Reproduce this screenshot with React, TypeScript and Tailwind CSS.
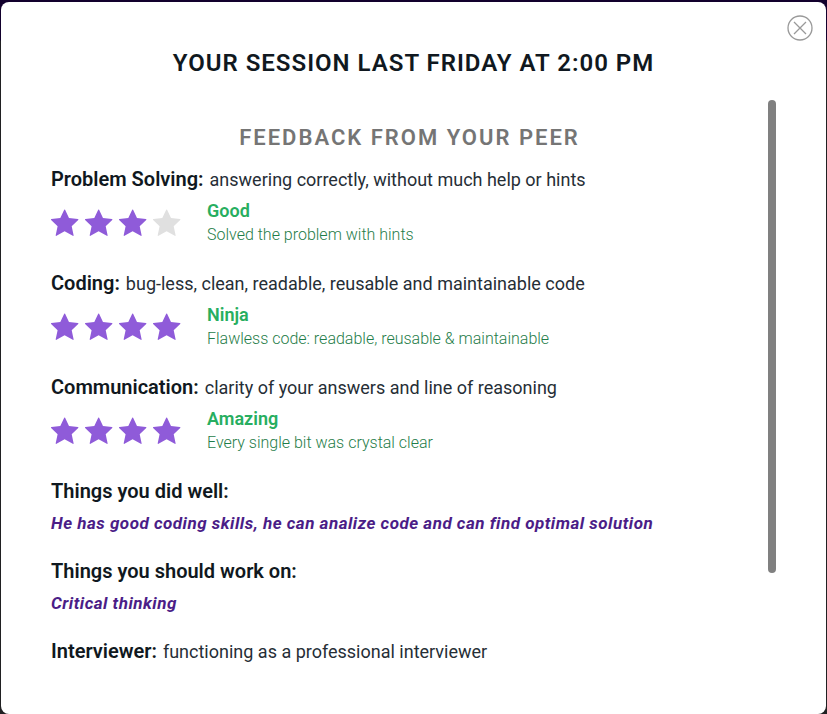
import type { ReactNode } from "react";

type Rating = { title: string; hint: string; stars: number; grade: string; detail: string };

const ratings: Rating[] = [
  { title: "Problem Solving:", hint: "answering correctly, without much help or hints", stars: 3, grade: "Good", detail: "Solved the problem with hints" },
  { title: "Coding:", hint: "bug-less, clean, readable, reusable and maintainable code", stars: 4, grade: "Ninja", detail: "Flawless code: readable, reusable & maintainable" },
  { title: "Communication:", hint: "clarity of your answers and line of reasoning", stars: 4, grade: "Amazing", detail: "Every single bit was crystal clear" },
];

const notes = [
  { title: "Things you did well:", text: "He has good coding skills, he can analize code and can find optimal solution" },
  { title: "Things you should work on:", text: "Critical thinking" },
];

function Star({ filled }: { filled: boolean }) {
  return (
    <svg viewBox="0 0 28 28" className={`size-7 ${filled ? "text-[#8f5bd9]" : "text-[#e0e0e0]"}`} fill="currentColor" aria-hidden="true">
      <path d="M14.100.8l3.900 8.200 8.900 1q.9.200.3.9l-6.500 6.300 1.900 9.100q0 .9-.8.4L13.600 22.200l-8.100 4.500q-.8.500-.8-.4l1.900-9.100L.1 10.900q-.6-.7.3-.9l8.900-1 3.900-8.200q.4-.7.9 0z" />
    </svg>
  );
}

function Title({ children, hint }: { children: ReactNode; hint?: string }) {
  return (
    <div className="flex items-baseline gap-1.5">
      <h3 className="text-xl leading-[30px] font-semibold">{children}</h3>
      {hint && <p className="text-lg leading-6 text-[#262e36]">{hint}</p>}
    </div>
  );
}

export default function App() {
  return (
    <div className="min-h-screen bg-linear-to-b from-[#12002d] from-[40px] to-[#202022] to-[41px] px-px pt-0.5 font-['Roboto',sans-serif] text-[#101820]">
      <main role="dialog" aria-labelledby="session-title" className="relative flex min-h-[712px] flex-col rounded-lg bg-white px-[50px] pb-10">
        <button type="button" aria-label="Close" className="absolute top-[13px] right-[13px] text-[#999999]">
          <svg viewBox="0 0 26 26" className="size-[26px]" fill="none" stroke="currentColor" strokeWidth="1.300" aria-hidden="true">
            <circle cx="13" cy="13" r="12" />
            <path d="M7 7l12 12M19 7L7 19" />
          </svg>
        </button>
        <h1 id="session-title" className="pt-[45px] text-center text-2xl leading-8 font-semibold tracking-[1px] uppercase">
          Your session last Friday at 2:00 PM
        </h1>
        <div className="mt-[21px] flex">
          <div className="min-w-0 grow pt-[22px]">
            <h2 className="text-center text-[22px] leading-8 font-semibold tracking-[2px] text-[#757575] uppercase">Feedback from your peer</h2>
            <div className="mt-2.5 flex flex-col gap-[21px]">
              {ratings.map((r) => (
                <section key={r.title}>
                  <Title hint={r.hint}>{r.title}</Title>
                  <div className="mt-[5px] flex items-center gap-6">
                    <div role="img" aria-label={`${r.stars} out of 4 stars`} className="flex w-[132px] gap-1.5">
                      {[1, 2, 3, 4].map((n) => (
                        <Star key={n} filled={n <= r.stars} />
                      ))}
                    </div>
                    <div>
                      <p className="text-lg leading-6 font-semibold text-[#27ae60]">{r.grade}</p>
                      <p className="text-base leading-6 font-light text-[#1f7d49]">{r.detail}</p>
                    </div>
                  </div>
                </section>
              ))}
              {notes.map((n) => (
                <section key={n.title}>
                  <Title>{n.title}</Title>
                  <p className="mt-[5px] text-[17px] leading-6 font-bold tracking-[0.5px] text-[#4b1d87] italic">{n.text}</p>
                </section>
              ))}
              <Title hint="functioning as a professional interviewer">Interviewer:</Title>
            </div>
          </div>
          <div aria-hidden="true" className="h-[473px] w-2 shrink-0 rounded-full bg-[#808080]" />
        </div>
      </main>
    </div>
  );
}
